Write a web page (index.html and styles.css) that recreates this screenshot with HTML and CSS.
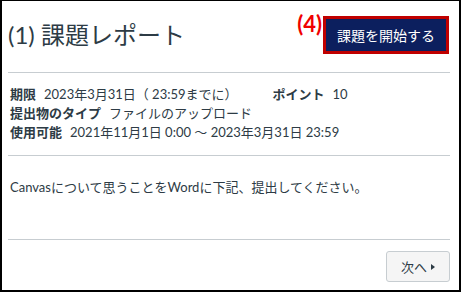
FILE: index.html
```html
<!DOCTYPE html>
<html lang="ja">
<head>
<meta charset="utf-8">
<link rel="stylesheet" href="styles.css">
</head>
<body>
<div class="frame">
  <div class="header">
    <h1 class="title">(1) 課題レポート</h1>
    <div class="btn-wrap">
      <span class="note">(4)</span>
      <button class="start">課題を開始する</button>
    </div>
  </div>
  <div class="details">
    <div class="row"><span class="lbl">期限</span><span class="val">2023年3月31日（ 23:59までに）</span><span class="lbl pts">ポイント</span><span class="val">10</span></div>
    <div class="row"><span class="lbl">提出物のタイプ</span><span class="val">ファイルのアップロード</span></div>
    <div class="row"><span class="lbl">使用可能</span><span class="val">2021年11月1日 0:00 ～ 2023年3月31日 23:59</span></div>
  </div>
  <div class="desc">Canvasについて思うことをWordに下記、提出してください。</div>
  <div class="footer">
    <button class="next">次へ<span class="tri"></span></button>
  </div>
</div>
</body>
</html>
```
FILE: styles.css
```css
html, body {
  margin: 0;
  padding: 0;
  background: #fff;
}
.frame {
  box-sizing: border-box;
  width: 461px;
  height: 292px;
  border: 2px solid #000;
  border-top-width: 1px;
  padding: 0 9px 0 6px;
  font-family: Lato, "Noto Sans CJK JP", sans-serif;
  color: #2d3b45;
  display: flex;
  flex-direction: column;
}
.header {
  display: flex;
  justify-content: space-between;
  align-items: center;
  height: 71px;
  border-bottom: 1px solid #c7cdd1;
}
.title {
  margin: 0;
  font-size: 24px;
  font-weight: 400;
  line-height: 30px;
  padding-bottom: 3px;
}
.btn-wrap {
  position: relative;
  margin-top: -3px;
}
.note {
  position: absolute;
  right: 100%;
  top: -4px;
  margin-right: 1px;
  color: #f00000;
  font-weight: 700;
  font-size: 22px;
  line-height: 24px;
  font-family: Lato, sans-serif;
}
.start {
  display: block;
  box-sizing: border-box;
  width: 126px;
  height: 38px;
  background: #0c1f5e;
  color: #fff;
  border: 3px solid #c00000;
  font-family: "Noto Sans CJK JP", sans-serif;
  font-size: 14px;
  padding: 0;
  margin-right: 1px;
}
.details {
  padding: 12px 0 13px 2px;
  border-bottom: 1px solid #c7cdd1;
  font-size: 13px;
  line-height: 19px;
}
.row {
  white-space: nowrap;
}
.lbl {
  font-weight: 700;
  margin-right: 8px;
}
.pts {
  margin-left: 35px;
}
.desc {
  padding: 22px 0 0 2px;
  height: 61px;
  font-size: 13px;
  line-height: 19px;
  border-bottom: 1px solid #c7cdd1;
}
.footer {
  display: flex;
  justify-content: flex-end;
  padding-top: 11px;
}
.next {
  box-sizing: border-box;
  width: 64px;
  height: 31px;
  background: #f5f5f5;
  border: 1px solid #c7cdd1;
  border-radius: 3px;
  color: #2d3b45;
  font-family: "Noto Sans CJK JP", sans-serif;
  font-size: 13px;
  padding: 0;
  display: flex;
  align-items: center;
  justify-content: center;
}
.tri {
  display: inline-block;
  width: 0;
  height: 0;
  border-top: 3px solid transparent;
  border-bottom: 3px solid transparent;
  border-left: 4px solid #2d3b45;
  margin-left: 4px;
}
```
